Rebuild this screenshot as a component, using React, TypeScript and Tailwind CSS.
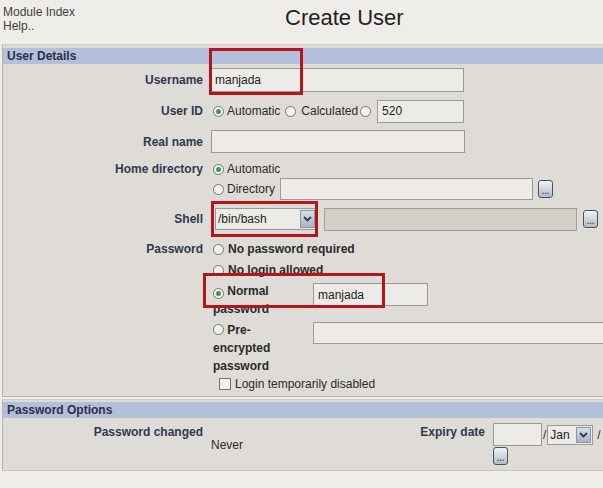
import React from "react";

const Radio = ({ checked = false }: { checked?: boolean }) => (
  <span className="relative inline-flex h-[11px] w-[11px] shrink-0 items-center justify-center rounded-full border border-[#6f747c] bg-[#f4f3f1] align-[-1px]">
    {checked && <span className="h-[5px] w-[5px] rounded-full bg-[#3f9d3a]" />}
  </span>
);

const DotsButton = () => (
  <span className="flex h-[18px] w-[15px] shrink-0 items-end justify-center rounded-[3px] border border-[#4b5362] bg-gradient-to-b from-[#f1f3f6] to-[#b3bbc8] pb-[1px] text-[9px] leading-[9px] font-bold text-[#46536e]">
    ...
  </span>
);

const TextInput = ({ value = "", className = "" }: { value?: string; className?: string }) => (
  <div
    className={`flex shrink-0 items-center border border-[#9b9a97] bg-[#ecebe7] px-[4px] text-[12px] text-[#222] ${className}`}
  >
    {value}
  </div>
);

const Chevron = () => (
  <svg width="9" height="6" viewBox="0 0 9 6">
    <path d="M1 1 L4.5 4.5 L8 1" fill="none" stroke="#2d3a57" strokeWidth="1.8" />
  </svg>
);

const SelectBox = ({ value, className = "" }: { value: string; className?: string }) => (
  <div className={`flex shrink-0 items-stretch border border-[#9b9a97] bg-[#ecebe7] ${className}`}>
    <span className="flex flex-1 items-center pl-[2px] text-[12px] text-[#222]">{value}</span>
    <span className="m-[1px] flex w-[15px] items-center justify-center border border-[#8e97a8] bg-gradient-to-b from-[#d9dfe8] to-[#a9b3c3]">
      <Chevron />
    </span>
  </div>
);

const Label = ({ children, className = "" }: { children: React.ReactNode; className?: string }) => (
  <div className={`w-[203px] shrink-0 pr-[3px] text-right font-bold text-[#2f3850] ${className}`}>{children}</div>
);

export default function App() {
  return (
    <div className="relative h-[488px] w-[603px] overflow-hidden bg-[#efedea] font-['Liberation_Sans',Arial,sans-serif] text-[12px] text-[#2a2a2a]">
      {/* top bar */}
      <div className="flex h-[44px]">
        <div className="w-[285px] pl-[3px] pt-[5px] leading-[14px] text-[#3f3f3f]">
          <div>Module Index</div>
          <div>Help..</div>
        </div>
        <div className="pt-[5px] text-[22px] leading-[26px] text-[#222]">Create User</div>
      </div>

      {/* User Details */}
      <div className="ml-[2px] border-t border-l border-b border-t-[#cfccc8] border-l-[#b7b4b0] border-b-[#b9b6b2] bg-[#dfdcd8] pt-[3px]">
        <div className="flex h-[16px] items-center bg-[#b4bfdb] pl-[4px] font-bold text-[#2b3147]">User Details</div>

        <div className="mt-[2px] flex h-[28px] items-center">
          <Label>Username</Label>
          <TextInput value="manjada" className="ml-[4px] h-[24px] w-[254px]" />
        </div>

        <div className="mt-[3px] flex h-[28px] items-center">
          <Label>User ID</Label>
          <span className="ml-[7px] flex">
            <Radio checked />
          </span>
          <span className="ml-[3px]">Automatic</span>
          <span className="ml-[5px] flex">
            <Radio />
          </span>
          <span className="ml-[5px]">Calculated</span>
          <span className="ml-[2px] flex">
            <Radio />
          </span>
          <TextInput value="520" className="ml-[6px] h-[23px] w-[87px]" />
        </div>

        <div className="mt-[3px] flex h-[27px] items-center">
          <Label>Real name</Label>
          <TextInput className="ml-[5px] h-[23px] w-[254px]" />
        </div>

        <div className="mt-[5px] flex">
          <Label className="leading-[18px]">Home directory</Label>
          <div className="flex flex-col pl-[7px]">
            <div className="flex h-[18px] items-center">
              <Radio checked />
              <span className="ml-[3px]">Automatic</span>
            </div>
            <div className="flex h-[22px] items-center">
              <Radio />
              <span className="ml-[3px]">Directory</span>
              <TextInput className="ml-[5px] h-[22px] w-[253px]" />
              <span className="ml-[5px]">
                <DotsButton />
              </span>
            </div>
          </div>
        </div>

        <div className="mt-[6px] flex h-[26px] items-center">
          <Label>Shell</Label>
          <SelectBox value="/bin/bash" className="ml-[9px] h-[22px] w-[102px]" />
          <div className="ml-[7px] h-[23px] w-[253px] shrink-0 border border-[#a29d95] bg-[#d4cfc6]" />
          <span className="ml-[6px]">
            <DotsButton />
          </span>
        </div>

        <div className="mt-[8px] flex">
          <Label className="leading-[18px]">Password</Label>
          <div className="flex flex-col pl-[7px] font-bold leading-[18px] text-[#2a2a2a]">
            <div className="flex h-[18px] items-center">
              <Radio />
              <span className="ml-[4px]">No password required</span>
            </div>
            <div className="mt-[3px] flex h-[18px] items-center">
              <Radio />
              <span className="ml-[4px]">No login allowed</span>
            </div>
            <div className="mt-[3px] flex items-start">
              <div className="w-[90px] shrink-0">
                <Radio checked /> <span>Normal password</span>
              </div>
              <TextInput value="manjada" className="mt-[1px] ml-[10px] h-[23px] w-[115px] font-normal" />
            </div>
            <div className="mt-[3px] flex items-start">
              <div className="w-[90px] shrink-0">
                <Radio /> <span>Pre-encrypted password</span>
              </div>
              <TextInput className="mt-[1px] ml-[10px] h-[22px] w-[300px]" />
            </div>
            <div className="flex h-[18px] items-center pl-[6px] font-normal">
              <span className="inline-block h-[12px] w-[12px] border border-[#6f747c] bg-[#f4f3f1]" />
              <span className="ml-[4px]">Login temporarily disabled</span>
            </div>
          </div>
        </div>
        <div className="h-[3px]" />
      </div>

      {/* Password Options */}
      <div className="mt-[2px] ml-[2px] border-t border-l border-b border-t-[#cfccc8] border-l-[#b7b4b0] border-b-[#c8c5c1] bg-[#dfdcd8] pt-[2px]">
        <div className="flex h-[16px] items-center bg-[#b4bfdb] pl-[4px] font-bold text-[#2b3147]">Password Options</div>
        <div className="mt-[4px] flex h-[48px]">
          <Label className="pt-[3px] leading-[14px]">Password changed</Label>
          <div className="flex w-[204px] shrink-0 items-center pb-[2px] pl-[5px]">Never</div>
          <div className="w-[83px] shrink-0 pt-[3px] pr-[8px] text-right leading-[14px] font-bold whitespace-nowrap text-[#2f3850]">
            Expiry date
          </div>
          <div className="flex shrink-0 flex-col pt-[1px]">
            <div className="flex items-center">
              <TextInput className="h-[23px] w-[49px]" />
              <span className="ml-[1px]">/</span>
              <SelectBox value="Jan" className="ml-[1px] h-[20px] w-[46px]" />
              <span className="ml-[4px]">/</span>
            </div>
            <div className="mt-[1px]">
              <DotsButton />
            </div>
          </div>
        </div>
      </div>

      {/* red highlight boxes */}
      <div className="absolute top-[48px] left-[209px] h-[47px] w-[94px] border-[3px] border-[#b3161c]" />
      <div className="absolute top-[201px] left-[211px] h-[36px] w-[107px] border-[3px] border-[#b3161c]" />
      <div className="absolute top-[273px] left-[203px] h-[35px] w-[182px] border-[3px] border-[#b3161c]" />
    </div>
  );
}
